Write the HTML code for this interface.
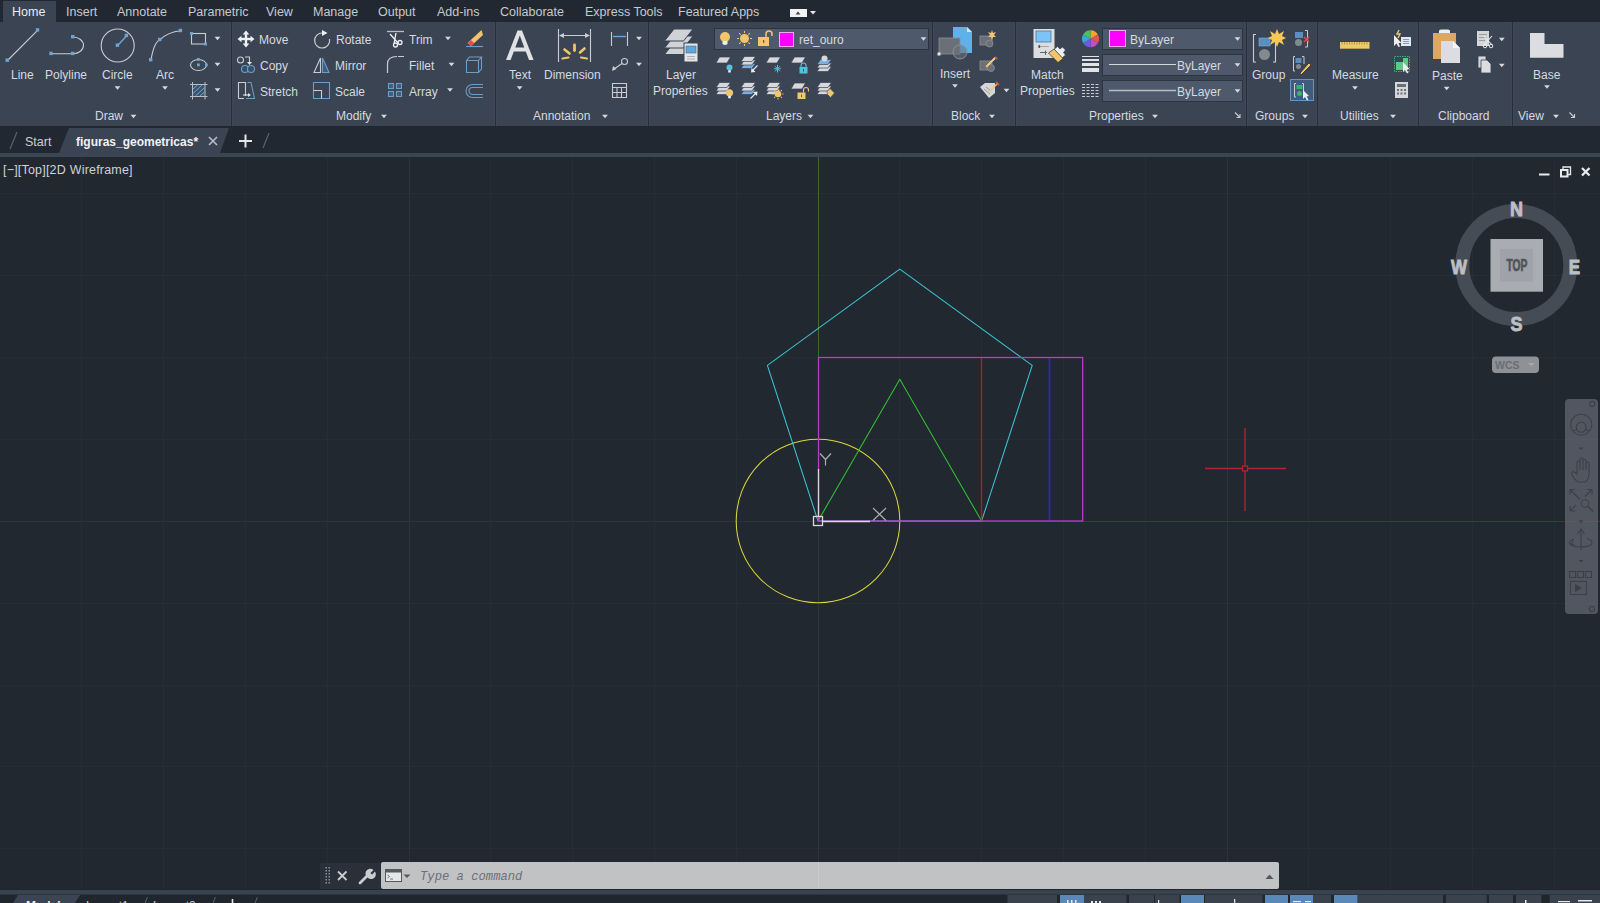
<!DOCTYPE html>
<html><head><meta charset="utf-8">
<style>
*{margin:0;padding:0;box-sizing:border-box}
html,body{width:1600px;height:903px;overflow:hidden;background:#212830;font-family:"Liberation Sans",sans-serif;color:#d8dde4;position:relative}
.a{position:absolute}
#topbar{left:0;top:0;width:1600px;height:22px;background:#222832}
#ribbon{left:0;top:22px;width:1600px;height:104px;background:#3b4453}
#ftabs{left:0;top:126px;width:1600px;height:27px;background:#222832}
#sep{left:0;top:153px;width:1600px;height:4px;background:#3b4554}
#vp{left:0;top:157px;width:1600px;height:733px;background:#212830;overflow:hidden}
#sep2{left:0;top:890px;width:1600px;height:4px;background:#3a4352}
#status{left:0;top:894px;width:1600px;height:9px;background:#20262e;overflow:hidden}
.t{position:absolute;white-space:nowrap;font-size:12px;line-height:14px;color:#d5dae0}
.mt{position:absolute;white-space:nowrap;font-size:12.5px;line-height:14px;top:5px;color:#c5cad1}
.vs{position:absolute;top:0;width:3px;height:104px;background:#272e39;border-left:1px solid #404857;border-right:1px solid #404857}
.dd{position:absolute;background:#4e596b;border:1px solid #2c3440}
svg{position:absolute;overflow:visible}
</style></head><body>
<div id="topbar" class="a">
 <div class="a" style="left:3px;top:1px;width:53px;height:21px;background:#3b4453"></div>
 <span class="mt" style="left:12px;color:#e8ebef">Home</span>
 <span class="mt" style="left:66px">Insert</span>
 <span class="mt" style="left:117px">Annotate</span>
 <span class="mt" style="left:188px">Parametric</span>
 <span class="mt" style="left:266px">View</span>
 <span class="mt" style="left:313px">Manage</span>
 <span class="mt" style="left:378px">Output</span>
 <span class="mt" style="left:437px">Add-ins</span>
 <span class="mt" style="left:500px">Collaborate</span>
 <span class="mt" style="left:585px">Express Tools</span>
 <span class="mt" style="left:678px">Featured Apps</span>
 <div class="a" style="left:790px;top:9px;width:16.5px;height:7.5px;background:#f2f3f4"></div>
 <svg width="40" height="22" style="left:790px;top:0"><path d="M5.5 14.5 H10.5 L8 11.5 Z" fill="#444"/><path d="M20 11 H26 L23 14.5 Z" fill="#e6e8ea"/></svg>
</div>
<div id="ribbon" class="a">
 <div class="vs" style="left:230px"></div>
 <div class="vs" style="left:494px"></div>
 <div class="vs" style="left:647px"></div>
 <div class="vs" style="left:931px"></div>
 <div class="vs" style="left:1014px"></div>
 <div class="vs" style="left:1245px"></div>
 <div class="vs" style="left:1316px"></div>
 <div class="vs" style="left:1417px"></div>
 <div class="vs" style="left:1511px"></div>
 <!-- dropdown boxes -->
 <div class="dd" style="left:714px;top:6px;width:215px;height:22px"></div>
 <div class="dd" style="left:1102px;top:6px;width:141px;height:22px"></div>
 <div class="dd" style="left:1102px;top:32px;width:141px;height:22px"></div>
 <div class="dd" style="left:1102px;top:58px;width:141px;height:22px"></div>
 <div class="a" style="left:1290px;top:57px;width:24px;height:22px;background:#3f5c7c;border:1px solid #6495c4"></div>
 <!-- Draw -->
 <span class="t" style="left:11px;top:46px">Line</span>
 <span class="t" style="left:45px;top:46px">Polyline</span>
 <span class="t" style="left:102px;top:46px">Circle</span>
 <span class="t" style="left:156px;top:46px">Arc</span>
 <span class="t" style="left:95px;top:87px">Draw</span>
 <!-- Modify -->
 <span class="t" style="left:259px;top:11px">Move</span>
 <span class="t" style="left:260px;top:37px">Copy</span>
 <span class="t" style="left:260px;top:63px">Stretch</span>
 <span class="t" style="left:336px;top:11px">Rotate</span>
 <span class="t" style="left:335px;top:37px">Mirror</span>
 <span class="t" style="left:335px;top:63px">Scale</span>
 <span class="t" style="left:409px;top:11px">Trim</span>
 <span class="t" style="left:409px;top:37px">Fillet</span>
 <span class="t" style="left:409px;top:63px">Array</span>
 <span class="t" style="left:336px;top:87px">Modify</span>
 <!-- Annotation -->
 <span class="t" style="left:509px;top:46px">Text</span>
 <span class="t" style="left:544px;top:46px">Dimension</span>
 <span class="t" style="left:533px;top:87px">Annotation</span>
 <!-- Layers -->
 <span class="t" style="left:799px;top:11px">ret_ouro</span>
 <span class="t" style="left:666px;top:46px">Layer</span>
 <span class="t" style="left:653px;top:62px">Properties</span>
 <span class="t" style="left:766px;top:87px">Layers</span>
 <!-- Block -->
 <span class="t" style="left:940px;top:45px">Insert</span>
 <span class="t" style="left:951px;top:87px">Block</span>
 <!-- Properties -->
 <span class="t" style="left:1130px;top:11px">ByLayer</span>
 <span class="t" style="left:1177px;top:37px">ByLayer</span>
 <span class="t" style="left:1177px;top:63px">ByLayer</span>
 <span class="t" style="left:1031px;top:46px">Match</span>
 <span class="t" style="left:1020px;top:62px">Properties</span>
 <span class="t" style="left:1089px;top:87px">Properties</span>
 <!-- Groups -->
 <span class="t" style="left:1252px;top:46px">Group</span>
 <span class="t" style="left:1255px;top:87px">Groups</span>
 <!-- Utilities -->
 <span class="t" style="left:1332px;top:46px">Measure</span>
 <span class="t" style="left:1340px;top:87px">Utilities</span>
 <!-- Clipboard -->
 <span class="t" style="left:1432px;top:47px">Paste</span>
 <span class="t" style="left:1438px;top:87px">Clipboard</span>
 <!-- View -->
 <span class="t" style="left:1533px;top:46px">Base</span>
 <span class="t" style="left:1518px;top:87px">View</span>
</div>
<!--RIBBONICONS-->
<svg width="1600" height="130" style="left:0;top:0">
 <defs>
  <g id="arr"><path d="M-2.9 -1.7 H2.9 L0 1.8 Z" fill="#d5d9de"/></g>
 </defs>
 <!-- ===== DRAW ===== -->
 <g stroke="#c9cdd3" stroke-width="1.1" fill="none">
  <path d="M7.5 60.5 L37.8 30.2"/>
  <path d="M51.3 53.7 H73 M73 37 A10.5 8.35 0 0 1 73 53.7"/>
  <circle cx="117.7" cy="45.5" r="16.5"/>
  <path d="M117.7 45.5 L126.7 35.7" stroke="#6ea3d4" stroke-width="1.5"/>
  <path d="M151 60 Q154 42 160 39.8 Q168 32 180.7 30.8"/>
  <rect x="191.5" y="33.5" width="14" height="10.5"/>
  <ellipse cx="198.5" cy="65" rx="8" ry="5.5"/>
  <rect x="192" y="84.5" width="13" height="12" fill="#3a5470" stroke="none"/><path d="M192.5 82V99.5M205 82V99.5M190 84.5H207.5M190 96.5H207.5" stroke="#b9bec5" stroke-width="1"/>
 </g>
 <g fill="#6ea3d4">
  <rect x="5.5" y="58.5" width="3.4" height="3.4"/><rect x="35.8" y="28.2" width="3.4" height="3.4"/>
  <rect x="49.3" y="51.7" width="3.4" height="3.4"/><rect x="71" y="51.7" width="3.4" height="3.4"/><rect x="71" y="35" width="3.4" height="3.4"/>
  <rect x="115.7" y="43.5" width="3.4" height="3.4"/><rect x="124.7" y="33.7" width="3.4" height="3.4"/>
  <rect x="149" y="58" width="3.4" height="3.4"/><rect x="158" y="37.8" width="3.4" height="3.4"/><rect x="178.7" y="28.8" width="3.4" height="3.4"/>
  <rect x="190" y="32" width="3" height="3"/><rect x="204" y="42.5" width="3" height="3"/>
  <rect x="197" y="63.5" width="2.8" height="2.8"/><rect x="197" y="58" width="2.8" height="2.8"/><rect x="205" y="63.5" width="2.8" height="2.8"/>
 </g>
 <path d="M193 89 L197.5 85 M193 93.5 L202 85 M195.5 96 L204.5 87.5 M200 96 L204.5 92" stroke="#7aaedc" stroke-width="0.9"/>
 <use href="#arr" x="117.5" y="88"/><use href="#arr" x="165" y="88"/>
 <use href="#arr" x="217.5" y="38.5"/><use href="#arr" x="217.5" y="64.5"/><use href="#arr" x="217.5" y="90"/>
 <use href="#arr" x="133.5" y="116.5"/>
 <!-- ===== MODIFY ===== -->
 <!-- move -->
 <g fill="#eef0f2">
  <rect x="240" y="37.8" width="12" height="2.4"/><rect x="244.8" y="33" width="2.4" height="12"/>
  <path d="M246 30.5 L249.3 34.5 H242.7 Z M246 47.5 L249.3 43.5 H242.7 Z M237.5 39 L241.5 35.7 V42.3 Z M254.5 39 L250.5 35.7 V42.3 Z"/>
 </g>
 <!-- copy -->
 <g fill="none" stroke="#c9cdd3" stroke-width="1.1">
  <circle cx="240.5" cy="60" r="3"/>
  <path d="M245 57 H249.5 V63"/>
 </g>
 <path d="M247 62 H252 L249.5 65 Z" fill="#e0e3e6"/>
 <g fill="#34506a" stroke="#6d9cc4" stroke-width="1.1"><circle cx="245" cy="69" r="3.5"/><circle cx="251" cy="69" r="3.5"/></g>
 <!-- stretch -->
 <g fill="none" stroke="#c9cdd3" stroke-width="1.1">
  <path d="M238.5 98.5 V82.5 H245.5 V96"/>
  <path d="M244 98.5 H238.5"/>
  <path d="M247.5 82.5 H251 L254.5 98.5 H246" stroke="#6d9cc4"/>
  <path d="M243 95 H248" stroke="#e0e3e6"/>
 </g>
 <path d="M248 93 L251 95 L248 97 Z" fill="#e0e3e6"/>
 <!-- rotate -->
 <g fill="none" stroke="#c9cdd3" stroke-width="1.2">
  <path d="M322.5 33 A7.5 7.5 0 1 0 329.5 39"/>
 </g>
 <path d="M322 30 L327.5 33 L322 36 Z" fill="#eef0f2"/>
 <!-- mirror -->
 <g fill="none" stroke-width="1.1">
  <path d="M320.5 58 V72.5 H314 Z" stroke="#c9cdd3"/>
  <path d="M322.5 58 V72.5 H329 Z" stroke="#6d9cc4" fill="#3c5f80"/>
 </g>
 <!-- scale -->
 <g fill="none" stroke-width="1.1">
  <path d="M313.5 82.5 H329.5 V98.5 H313.5 Z" stroke="#6d9cc4"/>
  <path d="M313.5 90.5 H321.5 V98.5" stroke="#c9cdd3"/>
 </g>
 <!-- trim -->
 <g fill="none" stroke="#eef0f2" stroke-width="1.3">
  <path d="M387 31.5 H404" stroke="#b9bec5"/>
  <path d="M390 34 L398.5 43.5 M396 33 L394 43.5"/>
  <circle cx="395.5" cy="45" r="2"/><circle cx="400" cy="42.5" r="2"/>
 </g>
 <use href="#arr" x="448" y="38.5"/>
 <!-- eraser -->
 <path d="M481.5 30 L483 35 L471 46 L467.5 43 Z" fill="#f0c46c"/>
 <path d="M471 40 L474.5 43.5 L471 46.5 L467.5 43 Z" fill="#d9534f"/>
 <path d="M466 46.5 H483" stroke="#6d9cc4" stroke-width="1.2"/>
 <!-- fillet -->
 <path d="M387.5 73 V64 Q387.5 56.5 397 56.5 M398 56.5 H404" fill="none" stroke="#c9cdd3" stroke-width="1.2"/>
 <use href="#arr" x="451.5" y="64.5"/>
 <!-- box -->
 <g fill="none" stroke="#6d9cc4" stroke-width="1.1">
  <path d="M466.5 60.5 H478.5 V72.5 H466.5 Z M466.5 60.5 L469.5 57 H481.5 L478.5 60.5 M481.5 57 V69 L478.5 72.5"/>
 </g>
 <!-- array -->
 <g fill="#3c5f80" stroke="#6d9cc4" stroke-width="1.1">
  <rect x="388.5" y="83.5" width="5" height="5"/><rect x="396.5" y="83.5" width="5" height="5"/>
  <rect x="388.5" y="91.5" width="5" height="5"/><rect x="396.5" y="91.5" width="5" height="5"/>
 </g>
 <use href="#arr" x="450" y="90"/>
 <!-- offset -->
 <path d="M483 84.5 H472.5 A6.5 6.5 0 0 0 472.5 97.5 H483 M483 87.5 H472.5 A3.5 3.5 0 0 0 472.5 94.5 H483" fill="none" stroke="#6d9cc4" stroke-width="1.1"/>
 <use href="#arr" x="384" y="116.5"/>
 <!-- ===== ANNOTATION ===== -->
 <path d="M506 60 L517.5 30.5 H522 L533.6 60 H529 L525.8 51.5 H513.8 L510.6 60 Z M515.3 47.5 H524.3 L519.8 35.5 Z" fill="#dfe2e5"/>
 <use href="#arr" x="519.6" y="88"/>
 <g stroke="#c9cdd3" stroke-width="1.1" fill="none">
  <path d="M558.5 29 V62 M590.5 29 V62 M561 35.5 H588"/>
 </g>
 <path d="M559 35.5 L564 33 V38 Z M590 35.5 L585 33 V38 Z" fill="#c9cdd3"/>
 <g stroke="#f0c46c" stroke-width="2.6" stroke-linecap="round">
  <path d="M574.5 45 V50.5" stroke-width="2.8"/>
  <path d="M564.5 49.5 L569.5 53.5"/>
  <path d="M584.5 48.5 L580 52.5"/>
  <path d="M562.5 58.5 L568.5 57.5" stroke-width="2.2"/>
  <path d="M587 58.5 L581 57.5" stroke-width="2.2"/>
 </g>
 <g stroke="#c9cdd3" stroke-width="1.1" fill="none">
  <path d="M611.5 32 V46 M627.5 32 V46"/>
  <path d="M613 36.5 H626" stroke="#6ea3d4" stroke-width="1.4"/>
  <circle cx="624.5" cy="61.5" r="3"/>
  <path d="M622 63.5 L614 69"/>
  <path d="M612.5 83.5 H626.5 V97.5 H612.5 Z M612.5 87.5 H626.5 M612.5 92.5 H626.5 M617 87.5 V97.5 M621.5 87.5 V97.5"/>
 </g>
 <path d="M612 71 L613 66 L616.5 69 Z" fill="#c9cdd3"/>
 <use href="#arr" x="639" y="38.5"/><use href="#arr" x="639" y="64.5"/>
 <use href="#arr" x="605" y="116.5"/>
</svg>
<svg width="1600" height="130" style="left:0;top:0">
 <!-- ===== LAYERS ===== -->
 <g fill="#d0d2d5" stroke="#3b4453" stroke-width="1">
  <path d="M664.5 54.5 L674 42.5 H693 L683.5 54.5 Z"/>
  <path d="M664.5 48 L674 36 H693 L683.5 48 Z"/>
  <path d="M664.5 41 L674 29 H693 L683.5 41 Z"/>
 </g>
 <rect x="684" y="43" width="14" height="19" fill="#e6e7e9" stroke="#3b4453" stroke-width="1"/>
 <rect x="686" y="46" width="10" height="7" fill="#5ea6dc" stroke="#3b6d99" stroke-width="0.6"/>
 <path d="M687 56.5 H695 M687 59 H695" stroke="#9aa0a6" stroke-width="0.8"/>
 <!-- layer dropdown icons -->
 <circle cx="725" cy="37" r="5" fill="#f2c66d"/>
 <path d="M722.5 41 H727.5 V44 Q725 46 722.5 44 Z" fill="#eceef0"/>
 <circle cx="744.5" cy="38.5" r="4.5" fill="#f2c66d"/>
 <g stroke="#f2c66d" stroke-width="1.1"><path d="M744.5 31V33M744.5 44V46M737 38.5H739M750 38.5H752M739.2 33.2L740.6 34.6M748.4 42.4L749.8 43.8M749.8 33.2L748.4 34.6M740.6 42.4L739.2 43.8"/></g>
 <rect x="758" y="37" width="11" height="9" fill="#f2c66d"/>
 <path d="M766 37 V34 A3 3 0 0 1 772 34 V36" fill="none" stroke="#f2c66d" stroke-width="1.5"/>
 <rect x="763" y="40" width="1.3" height="3" fill="#7a6020"/>
 <rect x="779.5" y="32.5" width="14" height="14" fill="#ff00ff" stroke="#f3a8f3" stroke-width="1"/>
 <!-- small layer icons row1 -->
 <path d="M716 63 L719.5 57 H730.5 L727 63 Z" fill="#d6d8db" stroke="#3b4453" stroke-width="0.7"/>
 <circle cx="729.5" cy="67.5" r="3" fill="#52c3da"/><rect x="728.2" y="70.2" width="2.6" height="2.3" fill="#eceef0"/>
 <path d="M741 68.5 L744.5 63.5 H755.5 L752 68.5 Z" fill="#79aee0" stroke="#3b4453" stroke-width="0.7"/>
 <path d="M741 65 L744.5 60 H755.5 L752 65 Z" fill="#d6d8db" stroke="#3b4453" stroke-width="0.7"/>
 <path d="M741 61.5 L744.5 56.5 H755.5 L752 61.5 Z" fill="#d6d8db" stroke="#3b4453" stroke-width="0.7"/>
 <path d="M757.5 65.5 L752 71" stroke="#eceef0" stroke-width="1.1"/><path d="M751 72.5 L751.5 68 L755.5 72 Z" fill="#eceef0"/>
 <path d="M766 63 L769.5 57 H780.5 L777 63 Z" fill="#d6d8db" stroke="#3b4453" stroke-width="0.7"/>
 <g stroke="#52c3da" stroke-width="1"><path d="M777.5 65V72.5M774 68.75H781M775 66.2L780 71.3M780 66.2L775 71.3"/></g>
 <path d="M791 63 L794.5 57 H805.5 L802 63 Z" fill="#d6d8db" stroke="#3b4453" stroke-width="0.7"/>
 <rect x="799.5" y="67" width="8" height="6.5" fill="#52c3da"/><path d="M801 67V65.5A2.5 2.5 0 0 1 806 65.5V67" fill="none" stroke="#52c3da" stroke-width="1.1"/><rect x="803" y="69" width="1" height="2.5" fill="#2a5560"/>
 <path d="M817 71.5 L820.5 66.5 H831.5 L828 71.5 Z" fill="#d6d8db" stroke="#3b4453" stroke-width="0.7"/>
 <path d="M817 68 L820.5 63 H831.5 L828 68 Z" fill="#d6d8db" stroke="#3b4453" stroke-width="0.7"/>
 <path d="M817 64.5 L820.5 59.5 H831.5 L828 64.5 Z" fill="#79aee0" stroke="#3b4453" stroke-width="0.7"/>
 <circle cx="824.5" cy="58.5" r="3" fill="#d6d8db"/>
 <path d="M716 94.5 L719.5 89.5 H730.5 L727 94.5 Z" fill="#d6d8db" stroke="#3b4453" stroke-width="0.7"/>
 <path d="M716 91 L719.5 86 H730.5 L727 91 Z" fill="#d6d8db" stroke="#3b4453" stroke-width="0.7"/>
 <path d="M716 87.5 L719.5 82.5 H730.5 L727 87.5 Z" fill="#d6d8db" stroke="#3b4453" stroke-width="0.7"/>
 <path d="M766 94.5 L769.5 89.5 H780.5 L777 94.5 Z" fill="#d6d8db" stroke="#3b4453" stroke-width="0.7"/>
 <path d="M766 91 L769.5 86 H780.5 L777 91 Z" fill="#d6d8db" stroke="#3b4453" stroke-width="0.7"/>
 <path d="M766 87.5 L769.5 82.5 H780.5 L777 87.5 Z" fill="#d6d8db" stroke="#3b4453" stroke-width="0.7"/>
 <path d="M817 94.5 L820.5 89.5 H831.5 L828 94.5 Z" fill="#d6d8db" stroke="#3b4453" stroke-width="0.7"/>
 <path d="M817 91 L820.5 86 H831.5 L828 91 Z" fill="#d6d8db" stroke="#3b4453" stroke-width="0.7"/>
 <path d="M817 87.5 L820.5 82.5 H831.5 L828 87.5 Z" fill="#d6d8db" stroke="#3b4453" stroke-width="0.7"/>
 <circle cx="729.5" cy="92.8" r="3.6" fill="#f2c66d"/><rect x="728.2" y="96" width="2.6" height="2.3" fill="#eceef0"/>
 <path d="M741 94.5 L744.5 89.5 H755.5 L752 94.5 Z" fill="#79aee0" stroke="#3b4453" stroke-width="0.7"/>
 <path d="M741 91 L744.5 86 H755.5 L752 91 Z" fill="#d6d8db" stroke="#3b4453" stroke-width="0.7"/>
 <path d="M741 87.5 L744.5 82.5 H755.5 L752 87.5 Z" fill="#d6d8db" stroke="#3b4453" stroke-width="0.7"/>
 <path d="M750.5 98.5 L756 93" stroke="#eceef0" stroke-width="1.1"/><path d="M757.5 91.5 L757 96 L753 92 Z" fill="#eceef0"/>
 <circle cx="778" cy="94" r="3.3" fill="#f2c66d"/><g stroke="#f2c66d" stroke-width="1.1"><path d="M778 88.5V89.8M778 98.2V99.5M772.5 94H773.8M782.2 94H783.5M774.2 90.2L775 91M781 97L781.8 97.8M781.8 90.2L781 91M775 97L774.2 97.8"/></g>
 <path d="M791 89 L794.5 83 H805.5 L802 89 Z" fill="#d6d8db" stroke="#3b4453" stroke-width="0.7"/>
 <rect x="797.5" y="92.5" width="8" height="6.5" fill="#f2c66d"/><path d="M803.5 92.5V90A2.5 2.5 0 0 1 808.5 90V91.5" fill="none" stroke="#f2c66d" stroke-width="1.1"/><rect x="801" y="94.5" width="1" height="2.5" fill="#7a6020"/>
 <path d="M827 91.5 L830 88.5 L834.5 93 L830.5 97.5 L827.5 94.5 Z" fill="#f2c66d" stroke="#3b4453" stroke-width="0.6"/>
 <use href="#arr" x="923.5" y="39"/>
 <use href="#arr" x="810.5" y="116.5"/>
 <!-- ===== BLOCK ===== -->
 <path d="M953 27 H967 L972 32 V53 H953 Z" fill="#5eb1ea"/>
 <path d="M967 27 V32 H972 Z" fill="#c9e6f9"/>
 <rect x="939" y="38" width="21" height="16" fill="#6b7078" stroke="#8a8f96" stroke-width="0.8"/>
 <circle cx="960" cy="52" r="7" fill="#6b7078" fill-opacity="0.55" stroke="#8a8f96" stroke-width="1"/>
 <rect x="937.5" y="52.5" width="3" height="3" fill="#e6e7e9"/>
 <use href="#arr" x="955" y="86"/>
 <g stroke="#8a8f96" stroke-width="0.8">
  <rect x="980" y="36" width="12" height="9" fill="#6b7078"/>
  <circle cx="989.5" cy="43.5" r="3.5" fill="#6b7078"/>
  <rect x="980" y="61" width="12" height="9" fill="#6b7078"/>
  <circle cx="991" cy="68" r="3.5" fill="#6b7078"/>
 </g>
 <path d="M992 30 L993 33 L996 32 L994 35 L996 37 L993 37 L992 40 L991 37 L988 37 L990 35 L988 32 L991 33 Z" fill="#f2c66d"/>
 <path d="M996 58 L988 66 L986 67 L987 65 L995 57 Z" fill="#f2c66d" stroke="#f2c66d"/><path d="M995 57 L997 59" stroke="#d9534f" stroke-width="2"/>
 <path d="M980 87 L985 83 H995 V93 L989 98 Z" fill="#d4d6d9"/>
 <path d="M984 89 L990 94 M986 87 L991 91" stroke="#8a8f96" stroke-width="0.8"/>
 <path d="M997 83 L989 91 L988 93 L990 92 L998 84 Z" fill="#f2c66d"/><path d="M996 82 L999 85" stroke="#d9534f" stroke-width="2"/>
 <use href="#arr" x="1006.5" y="90.5"/>
 <use href="#arr" x="992" y="116.5"/>
 <!-- ===== PROPERTIES ===== -->
 <rect x="1033.5" y="29" width="21" height="29" fill="#dcdde0"/>
 <rect x="1036" y="31" width="15" height="11" fill="#7cc4f4" stroke="#4a7aa6" stroke-width="0.8"/>
 <path d="M1038 46.5 H1049" stroke="#9aa0a6" stroke-width="0.9"/><rect x="1038.5" y="45" width="1.6" height="3" fill="#55595e"/>
 <path d="M1054 49.5 L1057.5 46.5 L1060 49 L1062.5 47 L1065.5 50 L1063.5 52.5 L1065.5 55 L1062 58 Z" fill="#eceef0" stroke="#2e3540" stroke-width="0.6"/>
 <path d="M1048.5 53 L1054 49 L1063 58.5 L1058 62.5 Z" fill="#f2c66d" stroke="#3a3020" stroke-width="0.7"/>
 <path d="M1040 52.5 H1047 M1045.5 50.5 V55" stroke="#55595e" stroke-width="0.9"/>
 <!-- color wheel -->
 <g transform="translate(1090.5 38.7)">
  <path d="M0 0 L0 -8.5 A8.5 8.5 0 0 1 7.36 -4.25 Z" fill="#f5a623"/>
  <path d="M0 0 L7.36 -4.25 A8.5 8.5 0 0 1 7.36 4.25 Z" fill="#e8544d"/>
  <path d="M0 0 L7.36 4.25 A8.5 8.5 0 0 1 0 8.5 Z" fill="#c150c8"/>
  <path d="M0 0 L0 8.5 A8.5 8.5 0 0 1 -7.36 4.25 Z" fill="#6a5ce0"/>
  <path d="M0 0 L-7.36 4.25 A8.5 8.5 0 0 1 -7.36 -4.25 Z" fill="#3aa5d8"/>
  <path d="M0 0 L-7.36 -4.25 A8.5 8.5 0 0 1 0 -8.5 Z" fill="#4cc05a"/>
 </g>
 <g fill="#e0e2e5">
  <rect x="1082" y="56" width="17" height="1"/><rect x="1082" y="59" width="17" height="2"/><rect x="1082" y="63" width="17" height="3"/><rect x="1082" y="68" width="17" height="4"/>
 </g>
 <g stroke="#c9cdd3" stroke-width="1" stroke-dasharray="3 1.5">
  <path d="M1082 84.5H1099M1082 87.5H1099M1082 90.5H1099M1082 93.5H1099M1082 96.5H1099"/>
 </g>
 <rect x="1109.5" y="30.5" width="16" height="16" fill="#ff00ff" stroke="#f3a8f3" stroke-width="1"/>
 <path d="M1109 64.5 H1176" stroke="#d4d6d9" stroke-width="1.2"/>
 <path d="M1109 90.5 H1176" stroke="#b9bec5" stroke-width="1.6"/>
 <use href="#arr" x="1237.5" y="39"/><use href="#arr" x="1237.5" y="65"/><use href="#arr" x="1237.5" y="91"/>
 <use href="#arr" x="1155" y="116.5"/>
 <path d="M1235 112.5 L1240 117.5 M1240 114 V117.5 H1236.5" stroke="#c9cdd3" stroke-width="1.1" fill="none"/>
 <!-- ===== GROUPS ===== -->
 <path d="M1256 34.5 H1253.5 V62 H1256 M1273 34.5 H1275.5 V62 H1273" fill="none" stroke="#c9cdd3" stroke-width="1.1"/>
 <rect x="1259" y="38" width="11" height="8" fill="#5b8ec0" stroke="#7aaad6" stroke-width="0.6"/>
 <circle cx="1264.5" cy="54.5" r="5.5" fill="#84898f"/>
 <path d="M1277 29 L1279 34 L1284 31 L1282 36 L1286 38 L1282 40 L1284 45 L1279 42 L1277 47 L1275 42 L1270 45 L1272 40 L1268 38 L1272 36 L1270 31 L1275 34 Z" fill="#f5c857"/>
 <!-- ungroup -->
 <path d="M1305 30.5 H1307.5 V47 H1305" fill="none" stroke="#c9cdd3" stroke-width="1"/>
 <rect x="1295" y="32" width="8" height="6" fill="#5b8ec0"/>
 <circle cx="1298.5" cy="42.5" r="3.5" fill="#84898f"/>
 <path d="M1304 37 L1309 42 M1309 37 L1304 42" stroke="#e84a4a" stroke-width="1.4"/>
 <!-- group edit -->
 <path d="M1295 56.5 H1293.5 V71 H1295 M1302 56.5 H1304 V64" fill="none" stroke="#c9cdd3" stroke-width="1"/>
 <rect x="1295.5" y="58" width="6" height="5" fill="#5b8ec0"/>
 <circle cx="1298.5" cy="66.5" r="2.5" fill="#84898f"/>
 <path d="M1310 65 L1302 73 L1301 74 L1302 72 L1309 64 Z" fill="#f2c66d" stroke="#f2c66d"/>
 <!-- select group -->
 <path d="M1296 83.5 H1294.5 V97 H1296 M1302 83.5 H1303.5 V92" fill="none" stroke="#c9cdd3" stroke-width="1"/>
 <rect x="1296.5" y="85" width="6" height="4" fill="#3fae6e"/>
 <circle cx="1299.5" cy="93.5" r="2.5" fill="#3fae6e"/>
 <path d="M1303 90 V99 L1305 97 L1307 100.5 L1308.5 99.5 L1306.5 96.5 L1309 96 Z" fill="#eceef0"/>
 <use href="#arr" x="1305" y="116.5"/>
 <!-- ===== UTILITIES ===== -->
 <rect x="1340" y="42" width="29.5" height="6.7" fill="#f2c66d"/>
 <path d="M1342 42 V44.5 M1344.5 42 V44.5 M1347 42 V44.5 M1349.5 42 V44.5 M1352 42 V44.5 M1354.5 42 V44.5 M1357 42 V44.5 M1359.5 42 V44.5 M1362 42 V44.5 M1364.5 42 V44.5 M1367 42 V44.5" stroke="#a88a3c" stroke-width="0.8"/>
 <use href="#arr" x="1355" y="88"/>
 <rect x="1401" y="37" width="10" height="9" fill="#dfe9f5"/>
 <path d="M1403 39.5 H1409 M1403 41.5 H1409 M1403 43.5 H1409" stroke="#5b8ec0" stroke-width="0.8"/>
 <path d="M1394 35 V46 L1396.5 43.5 L1398.5 47 L1400 46.5 L1398.5 43 L1401.5 43 Z" fill="#eceef0"/>
 <path d="M1399 30 L1397 34 H1400 L1398 38" stroke="#f2c66d" stroke-width="1.4" fill="none"/>
 <rect x="1394.5" y="56.5" width="15" height="15" fill="none" stroke="#3fae6e" stroke-dasharray="1.5 1" stroke-width="1"/>
 <path d="M1396 62 H1403 V58 H1408 V70 H1396 Z" fill="#5cc98a"/>
 <path d="M1403 62 V72 L1405 70 L1407 73.5 L1408.5 72.5 L1406.5 69.5 L1409.5 69 Z" fill="#eceef0"/>
 <rect x="1395" y="82" width="13" height="16" fill="#d4d6d9"/>
 <rect x="1397" y="84" width="9" height="3" fill="#6b7078"/>
 <g fill="#6b7078"><rect x="1397" y="89" width="2" height="2"/><rect x="1400.5" y="89" width="2" height="2"/><rect x="1404" y="89" width="2" height="2"/><rect x="1397" y="92.5" width="2" height="2"/><rect x="1400.5" y="92.5" width="2" height="2"/><rect x="1404" y="92.5" width="2" height="2"/></g>
 <use href="#arr" x="1393" y="116.5"/>
 <!-- ===== CLIPBOARD ===== -->
 <rect x="1433" y="33" width="23" height="26" fill="#dca766"/>
 <path d="M1439 33 V31 Q1439 29.5 1441 29.5 H1448 Q1450 29.5 1450 31 V33 Z" fill="#eceef0"/>
 <path d="M1441 41 H1453 L1460 48 V63 H1441 Z" fill="#dcdde0"/>
 <path d="M1453 41 V48 H1460 Z" fill="#f5f5f5"/>
 <use href="#arr" x="1446.7" y="88.5"/>
 <rect x="1477" y="31" width="12" height="15" fill="#d4d6d9"/>
 <path d="M1479 34.5H1487M1479 37.5H1487M1479 40.5H1485" stroke="#8a8f96" stroke-width="0.8"/>
 <path d="M1484 36 L1492 45 M1492 36 L1484 45" stroke="#eceef0" stroke-width="1.1"/>
 <circle cx="1485" cy="46" r="1.8" fill="none" stroke="#eceef0"/><circle cx="1491" cy="46" r="1.8" fill="none" stroke="#eceef0"/>
 <use href="#arr" x="1501.8" y="39.5"/>
 <rect x="1478" y="56" width="8" height="12" fill="#d4d6d9" stroke="#3b4453" stroke-width="0.8"/>
 <path d="M1481 60 H1487 L1491 64 V73 H1481 Z" fill="#dcdde0" stroke="#3b4453" stroke-width="0.8"/>
 <use href="#arr" x="1501.8" y="65.5"/>
 <!-- ===== VIEW ===== -->
 <path d="M1530 33 H1544.5 V44 H1563.5 V57.7 H1530 Z" fill="#dcdde0"/>
 <use href="#arr" x="1547" y="87"/>
 <use href="#arr" x="1556" y="116.5"/>
 <path d="M1569.5 112.5 L1574.5 117.5 M1574.5 114 V117.5 H1571" stroke="#c9cdd3" stroke-width="1.1" fill="none"/>
</svg>
<div id="ftabs" class="a">
 <svg width="1600" height="27" style="left:0;top:0">
  <polygon points="59,27 69,2 229,2 220,27" fill="#3b4453"/>
  <line x1="17" y1="6" x2="10" y2="23" stroke="#5a626e" stroke-width="1.2"/>
  <line x1="269" y1="7" x2="263" y2="22" stroke="#5a626e" stroke-width="1.2"/>
  <path d="M209 11 L217 19 M217 11 L209 19" stroke="#b9bec5" stroke-width="1.6"/>
  <path d="M239 15 H252 M245.5 8.5 V21.5" stroke="#e4e7ea" stroke-width="2"/>
 </svg>
 <span class="t" style="left:25px;top:9px;font-size:12.5px;color:#c9ced5">Start</span>
 <span class="t" style="left:76px;top:8.5px;font-weight:bold;color:#f0f2f4">figuras_geometricas*</span>
</div>
<div id="sep" class="a"></div>
<div id="vp" class="a">
 <span class="t" style="left:3px;top:6px;font-size:12.5px;letter-spacing:0.2px;color:#cfd3d8">[−][Top][2D Wireframe]</span>
</div>
<!--DRAWING-->
<svg width="1600" height="903" style="left:0;top:0">
 <defs><clipPath id="vpc"><rect x="0" y="157" width="1600" height="733"/></clipPath></defs>
 <g clip-path="url(#vpc)" shape-rendering="crispEdges">
  <g stroke="#262d35" stroke-width="1">
   <path d="M81.5 157V890M163.5 157V890M245.5 157V890M327.5 157V890M490.5 157V890M572.5 157V890M654.5 157V890M736.5 157V890M899.5 157V890M981.5 157V890M1063.5 157V890M1145.5 157V890M1308.5 157V890M1390.5 157V890M1472.5 157V890M1554.5 157V890"/>
   <path d="M0 193.5H1600M0 275.5H1600M0 357.5H1600M0 439.5H1600M0 603.5H1600M0 685.5H1600M0 766.5H1600M0 848.5H1600"/>
  </g>
  <g stroke="#2c333d" stroke-width="1">
   <path d="M409.5 157V890M1227.5 157V890M818.5 521V890M0 521.5H818"/>
  </g>
  <path d="M818.5 157V521" stroke="#3e6a37" stroke-width="1"/>
  <path d="M818 521.5H1600" stroke="#5f2a31" stroke-width="1"/>
 </g>
 <g fill="none" stroke-width="1.05">
  <circle cx="818" cy="521" r="81.8" stroke="#d9d63c"/>
  <polygon points="818,521 981.6,521 1032.2,365.4 899.8,269.2 767.4,365.4" stroke="#3cc3d3"/>
  <polyline points="818,521 899.8,379.3 981.6,521" stroke="#33c233"/>
  <path d="M981.5 357.5V521" stroke="#a02428" stroke-width="1.4"/>
  <path d="M1049.5 357.5V521" stroke="#2b2bac" stroke-width="1.8"/>
  <rect x="818.5" y="357.5" width="264.2" height="163.5" stroke="#b83cc4" stroke-width="1.3"/>
 </g>
 <!-- UCS icon -->
 <g fill="none" stroke="#d8d8d8" stroke-width="1.3">
  <path d="M818.5 469V516M823 521.5H870"/>
  <rect x="813.5" y="516.5" width="9" height="9"/>
  <path d="M820 453.5 L825.5 459.5 L831 453.5 M825.5 459.5 V465.5" stroke="#aaaeb3" stroke-width="1.2"/>
  <path d="M873 508 L886 520.5 M886 508 L873 520.5" stroke="#aaaeb3" stroke-width="1.2"/>
 </g>
 <!-- crosshair -->
 <g stroke="#b4242c" stroke-width="1.3" fill="none">
  <path d="M1205 468.5H1242.5M1247.5 468.5H1286M1245 428V466M1245 471V511"/>
  <rect x="1242.5" y="466" width="5" height="5"/>
 </g>
</svg>
<div id="sep2" class="a"></div>
<div id="status" class="a"></div>
<!--OVERLAY-->
<svg width="1600" height="903" style="left:0;top:0">
 <!-- window controls -->
 <path d="M1539 174.5 H1549.5" stroke="#e8eaec" stroke-width="2"/>
 <rect x="1561" y="170" width="6.5" height="6.5" fill="none" stroke="#e8eaec" stroke-width="2"/>
 <path d="M1563 169.5 V167 H1570.5 V174.5 H1568" fill="none" stroke="#e8eaec" stroke-width="1.3"/>
 <path d="M1582 168 L1589.5 175.5 M1589.5 168 L1582 175.5" stroke="#e8eaec" stroke-width="2.3"/>
 <!-- viewcube -->
 <circle cx="1516.3" cy="265" r="54" fill="none" stroke="#464c55" stroke-width="14"/>
 <rect x="1490.5" y="239" width="52.5" height="52.7" fill="#a9acb0"/>
 <rect x="1500" y="249" width="33" height="32.4" fill="#9fa2a8"/>
 <text x="0" y="0" font-family="Liberation Sans" font-weight="bold" font-size="16" fill="#4f535a" stroke="#4f535a" stroke-width="0.7" text-anchor="middle" transform="translate(1516.8 271.4) scale(0.64 1)">TOP</text>
 <g font-family="Liberation Sans" font-weight="bold" fill="#bcbfc3" stroke="#bcbfc3" stroke-width="0.9" text-anchor="middle" font-size="20">
  <text x="0" y="0" transform="translate(1516.4 215.7) scale(0.9 1)">N</text>
  <text x="0" y="0" transform="translate(1459.1 273.9) scale(0.85 1)">W</text>
  <text x="0" y="0" transform="translate(1574.5 274) scale(0.85 1)">E</text>
  <text x="0" y="0" transform="translate(1516.4 331.2) scale(0.9 1)">S</text>
 </g>
 <rect x="1492" y="356.5" width="47" height="16.5" rx="4" fill="#8e9297"/>
 <text x="1495" y="369" font-family="Liberation Sans" font-weight="bold" font-size="10.5" fill="#6a6e74">WCS</text>
 <path d="M1528 363 H1535 L1531.5 366 Z" fill="#a5a8ac"/>
 <!-- nav bar -->
 <rect x="1565" y="399" width="33" height="215" rx="4" fill="#5f656f" fill-opacity="0.78"/>
 <g fill="none" stroke="#3c4047" stroke-width="1.1">
  <circle cx="1592.3" cy="403.8" r="2.6"/>
  <circle cx="1592" cy="609" r="2.6"/>
  <path d="M1571 427 A10.5 10.5 0 1 1 1591.5 427 A10.5 10.5 0 0 1 1571 427 Z"/>
  <circle cx="1581.2" cy="427.3" r="5"/>
  <path d="M1572.5 431 L1577 429.5 M1590 431 L1585.5 429.5"/>
  <path d="M1574 478 Q1571 474 1572 472 Q1574 471 1577 474 V462 Q1578.5 459.5 1580 462 V470 V459 Q1581.5 457 1583 459 V470 V460.5 Q1584.5 458.5 1586 460.5 V470 V463 Q1587.5 461 1589 463 V474 Q1588.5 480 1585 482 H1578 Q1576 481 1574 478 Z"/>
  <path d="M1570 489.5 L1580 499.5 M1570 489.5 V494.5 M1570 489.5 H1575 M1592 489.5 L1585 496.5 M1592 489.5 H1587 M1592 489.5 V494.5 M1570 511 L1576 505 M1570 511 V506 M1570 511 H1575"/>
  <circle cx="1585" cy="503.5" r="3.8"/><path d="M1588 506.5 L1593 511.5" stroke-width="1.6"/>
  <path d="M1581 530 V550 M1577.5 534 L1581 529 L1584.5 534"/>
  <path d="M1574 539 Q1569 541 1569.5 543 Q1571 547 1581 547 Q1591 547 1592 543 Q1592 540 1587 538.5"/>
  <path d="M1573 541 L1571 545 L1575 545"/>
  <rect x="1569.5" y="571.5" width="6" height="6"/><rect x="1577.5" y="571.5" width="6" height="6"/><rect x="1585.5" y="571.5" width="6" height="6"/>
  <rect x="1570.5" y="581.5" width="16" height="13"/>
 </g>
 <path d="M1575 584 V592 L1582 588 Z" fill="#3c4047"/>
 <g fill="#3c4047"><path d="M1578.5 447.5 H1583.5 L1581 450 Z"/><path d="M1578.5 520.5 H1583.5 L1581 523 Z"/><path d="M1578.5 560 H1583.5 L1581 562.5 Z"/></g>
 <!-- command line -->
 <rect x="320" y="863" width="61" height="26" fill="#2a3039"/>
 <g fill="#8a9099">
  <rect x="325.5" y="867" width="1.5" height="1.5"/><rect x="328.5" y="867" width="1.5" height="1.5"/>
  <rect x="325.5" y="870" width="1.5" height="1.5"/><rect x="328.5" y="870" width="1.5" height="1.5"/>
  <rect x="325.5" y="873" width="1.5" height="1.5"/><rect x="328.5" y="873" width="1.5" height="1.5"/>
  <rect x="325.5" y="876" width="1.5" height="1.5"/><rect x="328.5" y="876" width="1.5" height="1.5"/>
  <rect x="325.5" y="879" width="1.5" height="1.5"/><rect x="328.5" y="879" width="1.5" height="1.5"/>
  <rect x="325.5" y="882" width="1.5" height="1.5"/><rect x="328.5" y="882" width="1.5" height="1.5"/>
 </g>
 <path d="M338 871.5 L346.5 880 M346.5 871.5 L338 880" stroke="#c8ccd1" stroke-width="1.8"/>
 <path d="M360 883 L368 875" stroke="#c8ccd1" stroke-width="2.8" stroke-linecap="round"/>
 <path d="M367 877 A4.5 4.5 0 1 1 373.5 870 L370.5 873 L372 874.5 L375 871.5 A4.5 4.5 0 0 1 367 877 Z" fill="#c8ccd1"/>
 <rect x="381" y="862" width="898" height="27" rx="2" fill="#c1c2c4"/><path d="M818.5 862V889" stroke="#c8cacd" stroke-width="1"/>
 <rect x="385.5" y="869.5" width="16" height="12" fill="#e4e5e6" stroke="#55595e" stroke-width="1"/>
 <rect x="386" y="870" width="15" height="2.5" fill="#55595e"/>
 <path d="M387.5 875 L389.5 876.5 L387.5 878 M390 879 H393" stroke="#55595e" stroke-width="0.8" fill="none"/>
 <path d="M403.5 874.5 H410.5 L407 878 Z" fill="#55595e"/>
 <text x="420" y="880" font-family="Liberation Mono" font-style="italic" font-size="12.2" fill="#6d7075" >Type a command</text>
 <path d="M1265.5 879 H1273.5 L1269.5 874.5 Z" fill="#55595e"/>
 <!-- status bar -->
 <rect x="0" y="889" width="1600" height="1" fill="#20252d"/><rect x="0" y="890" width="1600" height="4.5" fill="#39424f"/>
 <polygon points="13,903 18,895 80,895 75,903" fill="#3b4453"/>
 <g fill="#3a424e">
  <rect x="1007.5" y="895" width="49.5" height="8"/><rect x="1084" y="895" width="42.5" height="8"/>
  <rect x="1129" y="895" width="25" height="8"/><rect x="1155" y="895" width="24.5" height="8"/>
  <rect x="1205" y="895" width="57.5" height="8"/><rect x="1313" y="895" width="18" height="8"/><rect x="1357.5" y="895" width="85.5" height="8"/>
  <rect x="1446" y="895" width="40.7" height="8"/><rect x="1489" y="895" width="24" height="8"/>
  <rect x="1516" y="895" width="25.4" height="8"/><rect x="1549.7" y="895" width="50.3" height="8"/>
 </g>
 <g fill="#5a88b8">
  <rect x="1060" y="895" width="24" height="8"/><rect x="1181" y="895" width="23" height="8"/>
  <rect x="1265" y="895" width="23" height="8"/><rect x="1290" y="895" width="23" height="8"/>
  <rect x="1334" y="895" width="23.5" height="8"/>
 </g>
 <g fill="#e6e8ea">
  <rect x="1067" y="900" width="1.5" height="3"/><rect x="1071" y="900" width="1.5" height="3"/><rect x="1075" y="900" width="1.5" height="3"/>
  <rect x="1091" y="901" width="2" height="2"/><rect x="1095" y="901" width="2" height="2"/><rect x="1099" y="901" width="2" height="2"/>
  <rect x="1158" y="900" width="1.2" height="3"/><rect x="1234" y="899" width="1.2" height="4"/>
  <rect x="1293" y="901" width="8" height="1.2"/><rect x="1305" y="901" width="6" height="1.2"/>
  <rect x="1525" y="900" width="1.5" height="3"/><rect x="1558" y="901" width="12" height="1.2"/><rect x="1578" y="900" width="14" height="1.5"/>
 </g>
 <g font-family="Liberation Sans" font-size="12" fill="#e8eaec">
  <text x="26" y="910" font-weight="bold">Model</text>
  <text x="86" y="910" fill="#c9ced5">Layout1</text>
  <text x="153" y="910" fill="#c9ced5">Layout2</text>
 </g>
 <path d="M145 903 L147.5 897 M213 903 L215.5 897 M255 903 L257.5 897" stroke="#5a626e" stroke-width="1"/>
 <path d="M232.5 899 V903" stroke="#e6e8ea" stroke-width="1.6"/>
</svg>
</body></html>
